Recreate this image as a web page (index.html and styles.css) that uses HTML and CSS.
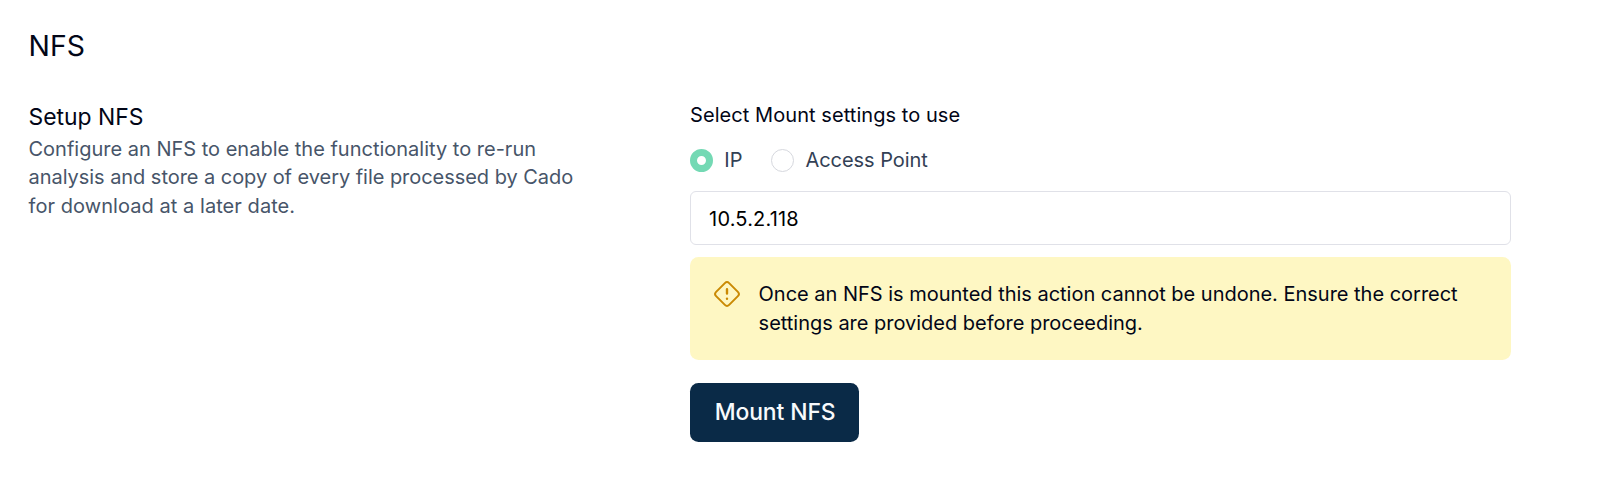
FILE: index.html
```html
<!DOCTYPE html>
<html lang="en">
<head>
<meta charset="utf-8">
<title>NFS</title>
<link rel="stylesheet" href="styles.css">
</head>
<body>
<main class="page">
  <h1 class="page-title">NFS</h1>
  <div class="columns">
    <section class="intro">
      <h2 class="intro-title">Setup NFS</h2>
      <p class="intro-text">Configure an NFS to enable the functionality to re-run<br><span class="snug">analysis and store a copy of every file processed by Cado</span><br><span class="loose">for download at a later date.</span></p>
    </section>
    <form class="settings">
      <p class="settings-label loose">Select Mount settings to use</p>
      <div class="choices">
        <label class="choice"><input class="radio" type="radio" name="mount" checked><span>IP</span></label>
        <label class="choice"><input class="radio" type="radio" name="mount"><span class="snug">Access Point</span></label>
      </div>
      <input class="field" type="text" value="10.5.2.118">
      <div class="alert">
        <svg class="alert-icon" viewBox="0 0 28 28" fill="none" stroke="#ca8a04" stroke-width="2" stroke-linecap="round" stroke-linejoin="round">
          <rect x="4.8" y="4.8" width="18.4" height="18.4" rx="3" transform="rotate(45 14 14)"/>
          <path stroke-width="2.4" d="M14 9.2v4.4M14 18.6v.1"/>
        </svg>
        <p class="alert-text">Once an NFS is mounted this action cannot be undone. Ensure the correct<br>settings are provided before proceeding.</p>
      </div>
      <button class="submit" type="button">Mount NFS</button>
    </form>
  </div>
</main>
</body>
</html>
```
FILE: styles.css
```css
* { box-sizing: border-box; margin: 0; }
body {
  background: #fff;
  color: #020617;
  font-family: Inter, sans-serif;
  font-size: 20px;
  line-height: 28.6px;
}
.page { padding: 26px 88.6px 0 28.5px; }
.page-title { font-size: 28.4px; font-weight: 400; line-height: 40px; }
.snug { letter-spacing: -0.045px; }
.loose { letter-spacing: 0.06px; }
.columns { display: grid; grid-template-columns: 661.6px 1fr; padding-top: 33.5px; }
.intro-title { font-size: 22.9px; font-weight: 400; line-height: 34.4px; }
.intro-text { padding-top: 0.6px; color: #475569; }
.settings { display: flex; flex-direction: column; }
.settings-label { padding-top: 1px; }
.choices { display: flex; gap: 28.8px; margin-top: 16.6px; height: 29px; }
.choice { display: flex; align-items: center; gap: 11.2px; color: #334155; }
.radio {
  appearance: none;
  width: 23px;
  height: 23px;
  margin: 0;
  border: 1.4px solid #d6d8de;
  border-radius: 50%;
  background: #fff;
}
.radio:checked { border: 7.5px solid #74d9b4; }
.field {
  height: 54px;
  margin-top: 16.5px;
  padding: 1px 18px 0;
  border: 1.4px solid #e0e1e8;
  border-radius: 6px;
  color: #000;
  font: inherit;
  letter-spacing: 0.18px;
  outline: none;
}
.alert {
  display: flex;
  gap: 17.5px;
  height: 102.5px;
  margin-top: 12px;
  padding: 22.5px 23px;
  border-radius: 8.5px;
  background: #fef7c3;
}
.alert-icon { flex: none; width: 28px; height: 28px; }
.alert-text { padding-top: 0.4px; letter-spacing: -0.015px; }
.submit {
  align-self: flex-start;
  width: 169px;
  height: 59.5px;
  margin-top: 23px;
  padding: 0 0 0 1px;
  border: 0;
  border-radius: 8.5px;
  background: #0a2a47;
  color: #f8fafc;
  font: 500 22.9px/34px Inter, sans-serif;
  letter-spacing: -0.1px;
}
```
